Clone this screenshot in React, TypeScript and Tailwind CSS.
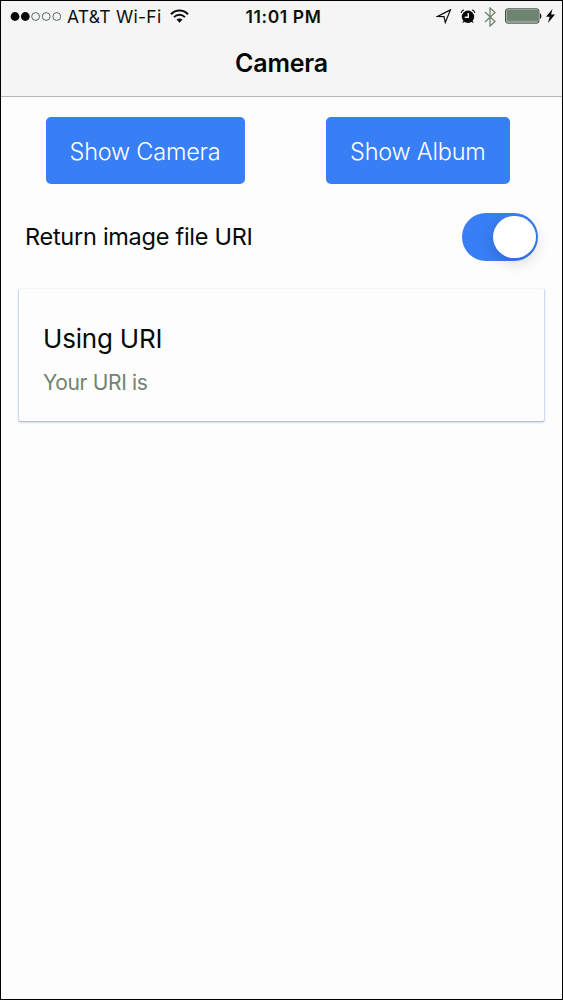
import React, { useState } from "react";

function StatusBar() {
  return (
    <div className="flex h-[31px] items-center pl-[9px] pr-[7px] text-[#0b120c]">
      <div className="flex flex-1 items-center">
        <svg width="53" height="12" viewBox="0 0 53 12" fill="none">
          <circle cx="5" cy="5.5" r="4.4" fill="#0b0b0b" />
          <circle cx="15.3" cy="5.5" r="4.4" fill="#0b0b0b" />
          <circle cx="25.6" cy="5.5" r="3.9" stroke="#45574a" strokeWidth="0.9" />
          <circle cx="36.2" cy="5.5" r="3.9" stroke="#45574a" strokeWidth="0.9" />
          <circle cx="46.8" cy="5.5" r="3.9" stroke="#45574a" strokeWidth="0.9" />
        </svg>
        <span className="ml-[4px] whitespace-nowrap text-[17.5px] leading-none tracking-[0.25px]">AT&amp;T Wi-Fi</span>
        <svg className="-mt-px ml-[9px]" width="19" height="14" viewBox="0 0 19 14" fill="none" stroke="#0b120c">
          <path d="M1 5.2C5.8.3 13.2.3 18 5.2" strokeWidth="2.1" />
          <path d="M4 8.2C7.2 5 11.8 5 15 8.2" strokeWidth="1.9" />
          <path d="M6.5 10.6C8.3 9 10.7 9 12.5 10.6L9.5 13.7Z" fill="#0b120c" stroke="none" />
        </svg>
      </div>
      <span className="ml-[2px] whitespace-nowrap text-[17.5px] font-semibold leading-none tracking-[0.6px]">11:01 PM</span>
      <div className="flex flex-1 items-center justify-end">
        <svg width="16" height="16" viewBox="0 0 16 16" fill="none" stroke="#0b120c" strokeWidth="1.2">
          <path d="M14.4 0.9L1.6 7.4L8 7.7L9.3 13.5Z" strokeLinejoin="miter" />
        </svg>
        <svg className="ml-[8px]" width="16" height="16" viewBox="0 0 16 16" fill="none">
          <circle cx="8" cy="7.8" r="6.2" fill="#0b0b0b" />
          <path d="M1.3 3.5C1.7 2.5 2.5 1.6 3.6 1.1M14.7 3.5C14.3 2.5 13.5 1.6 12.4 1.1" stroke="#0b0b0b" strokeWidth="1.1" strokeLinecap="round" />
          <path d="M3.6 12.4L2.8 13.6M12.4 12.4L13.2 13.6" stroke="#0b0b0b" strokeWidth="1.1" />
          <path d="M8.3 4V8.2H4.8" stroke="#f5f5f5" strokeWidth="1.4" />
        </svg>
        <svg className="ml-[8px]" width="12" height="20" viewBox="0 0 12 20" fill="none" stroke="#6f8271" strokeWidth="1.3">
          <path d="M1 5L11 14.5L6 19V1L11 5.5L1 15" />
        </svg>
        <svg className="-mt-px ml-[9px]" width="37" height="16" viewBox="0 0 37 16" fill="none">
          <rect x="0.6" y="0.9" width="33.3" height="14.2" rx="2" stroke="#26372a" strokeWidth="1" />
          <rect x="1.5" y="1.8" width="31.5" height="12.4" rx="1" fill="#6f8470" />
          <path d="M2 13.2H32.5" stroke="#a8b5aa" strokeWidth="0.8" />
          <path d="M35 5.2C36.8 5.8 36.8 10.2 35 10.8Z" fill="#0b120c" />
        </svg>
        <svg className="-mt-[2px] ml-[4px]" width="9" height="14" viewBox="0 0 9 14" fill="#0b0b0b">
          <path d="M6.5 0L0 7.8H3.6L2 14L9 5.6H5.1Z" />
        </svg>
      </div>
    </div>
  );
}

function ActionButton({ children }: { children: React.ReactNode }) {
  return (
    <button className="h-[67px] rounded-[5px] bg-[#387ef5] px-[24px] pt-[2px] text-[23.5px] font-light leading-none tracking-[-0.22px] text-white">
      <span className="whitespace-nowrap">{children}</span>
    </button>
  );
}

export default function App() {
  const [on, setOn] = useState(true);
  return (
    <div className="flex h-[1000px] w-[563px] flex-col border border-black bg-[#fdfdfd] font-['Inter',sans-serif] text-[#050a06]">
      <header className="h-[96px] border-b border-[#b5b7be] bg-[#f5f5f5]">
        <StatusBar />
        <h1 className="flex h-[63px] items-center justify-center text-[25px] font-semibold leading-none tracking-[-0.2px]">Camera</h1>
      </header>
      <main>
        <div className="flex pt-[20px]">
          <div className="w-[280px] pl-[44.5px]"><ActionButton>Show Camera</ActionButton></div>
          <div className="flex-1 pl-[45px]"><ActionButton>Show Album</ActionButton></div>
        </div>
        <div className="mt-[29px] flex h-[48px] items-center justify-between px-[24px]">
          <span className="-mt-px whitespace-nowrap text-[23.5px] leading-none tracking-[-0.27px]">Return image file URI</span>
          <button
            role="switch"
            aria-checked={on}
            onClick={() => setOn(!on)}
            className={`flex h-[48px] w-[76.5px] items-center rounded-full px-[2.5px] ${on ? "justify-end bg-[#387ef5]" : "justify-start bg-[#e6e6e6]"}`}
          >
            <span className="h-[42.5px] w-[42.5px] rounded-full bg-white shadow-[0_5px_14px_rgba(0,0,0,0.16)]" />
          </button>
        </div>
        <section className="mx-[17px] mt-[27px] h-[134px] rounded-[3px] border border-x-[#cbdcf2] border-t-[#f4f4f5] border-b-[#b4bfd0] bg-[#fdfdfd] pl-[24px] pt-[34px] shadow-[0_1px_2px_rgba(90,120,170,0.22)]">
          <h2 className="text-[26px] leading-[32px] tracking-[-0.2px]">Using URI</h2>
          <p className="mt-[15px] text-[21px] leading-[26px] tracking-[-0.35px] text-[#6f8472]">Your URI is</p>
        </section>
      </main>
    </div>
  );
}
